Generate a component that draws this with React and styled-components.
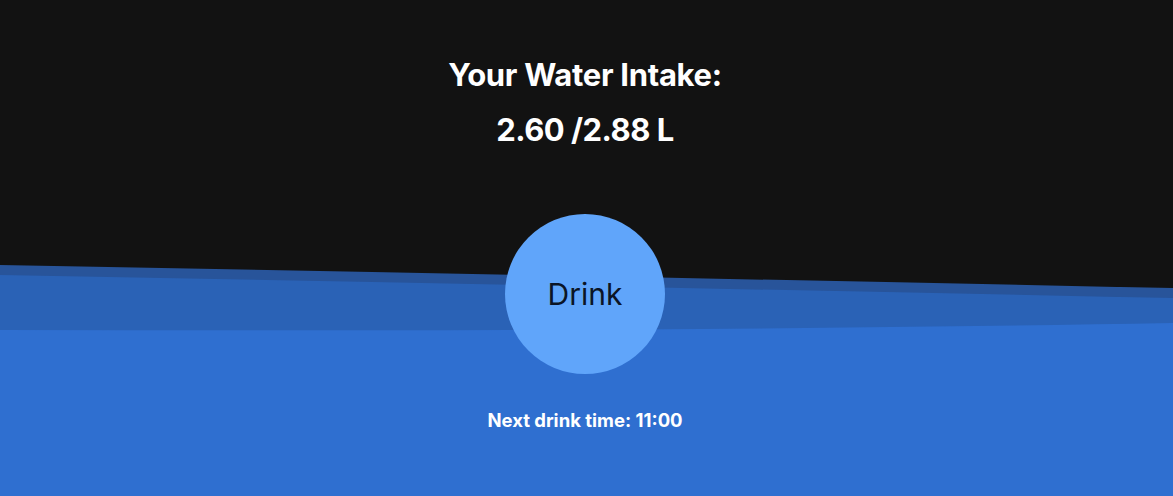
import React from "react";
import styled, { createGlobalStyle } from "styled-components";

const Global = createGlobalStyle`
  html, body { margin: 0; padding: 0; background: #121212; }
  body { font-family: Inter, "Noto Sans", sans-serif; }
`;

const Page = styled.div`
  position: relative;
  width: 100%;
  height: 496px;
  overflow: hidden;
  background: #121212;
`;

const Waves = styled.svg`
  position: absolute;
  left: 0;
  top: 0;
  width: 100%;
  height: 100%;
  z-index: 0;
`;

const Content = styled.main`
  position: relative;
  z-index: 1;
  display: flex;
  flex-direction: column;
  align-items: center;
  padding: 56px 3px 0 0;
`;

const Title = styled.h1`
  margin: 0;
  color: #ffffff;
  font-size: 31px;
  font-weight: 700;
  line-height: 38px;
  letter-spacing: -0.3px;
`;

const Amount = styled.h2`
  margin: 17px 0 0;
  color: #ffffff;
  font-size: 31px;
  font-weight: 700;
  line-height: 38px;
  letter-spacing: -0.5px;
`;

const DrinkButton = styled.button`
  margin-top: 65px;
  width: 160px;
  height: 160px;
  border-radius: 50%;
  border: none;
  background: #60a5fa;
  color: #0b1526;
  font-family: Inter, sans-serif;
  font-size: 30px;
  font-weight: 400;
  cursor: pointer;
  display: flex;
  align-items: center;
  justify-content: center;
  padding: 0;
`;

const NextTime = styled.p`
  margin: 34px 0 0;
  color: #ffffff;
  font-size: 18.5px;
  font-weight: 700;
  line-height: 24px;
`;

export default function App() {
  return (
    <>
      <Global />
      <Page>
        <Waves viewBox="0 0 1173 496" preserveAspectRatio="none">
          <path d="M0 265 Q 600 276 1173 288 L1173 496 L0 496 Z" fill="#28549a" />
          <path d="M0 275 Q 600 286 1173 298 L1173 496 L0 496 Z" fill="#2a62b6" />
          <path d="M0 330 C 400 331 800 330 1173 323 L1173 496 L0 496 Z" fill="#2f6fd0" />
        </Waves>
        <Content>
          <Title>Your Water Intake:</Title>
          <Amount>2.60 /2.88 L</Amount>
          <DrinkButton>Drink</DrinkButton>
          <NextTime>Next drink time: 11:00</NextTime>
        </Content>
      </Page>
    </>
  );
}
